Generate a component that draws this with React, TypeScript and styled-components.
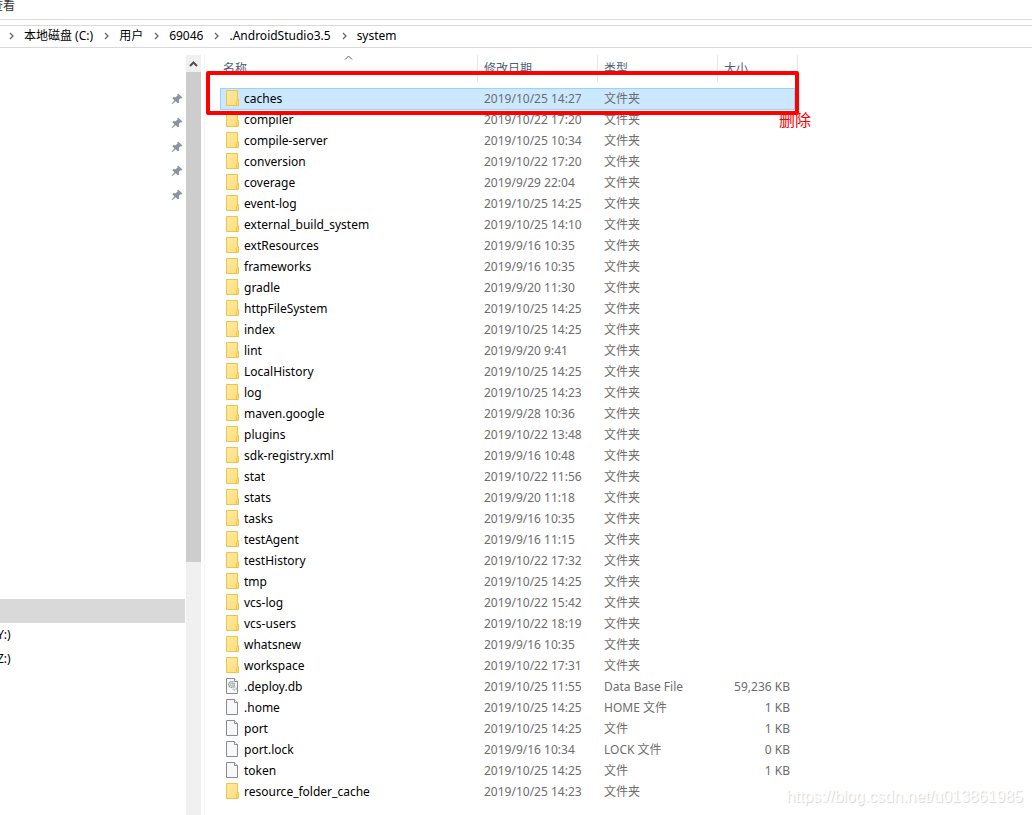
import React from "react";
import styled, { createGlobalStyle, css } from "styled-components";

const GlobalStyle = createGlobalStyle`
  *, *::before, *::after { box-sizing: border-box; }
  body {
    margin: 0;
    background: #fff;
    color: #000;
    font: 12px/21px "Noto Sans", "Noto Sans CJK SC", sans-serif;
  }
  button { font: inherit; color: inherit; background: none; border: 0; padding: 0; cursor: default; }
`;

const Explorer = styled.div`
  position: relative;
  display: flex;
  flex-direction: column;
  min-height: 100vh;
  overflow: hidden;
`;

const MenuBar = styled.nav`
  display: flex;
  height: 20px;
  border-bottom: 1px solid #d9d9d9;
`;

const MenuItem = styled.button`
  height: 12px;
  margin-left: -9px;
  line-height: 12px;
  color: #333;
`;

const AddressBar = styled.nav`
  display: flex;
  align-items: center;
  height: 23px;
  margin-top: 5px;
  padding: 0 0 1px 8px;
  border: solid #d9d9d9;
  border-width: 1px 0;
  white-space: nowrap;
`;

const Crumb = styled.button`
  margin: 0 10px 0 9px;
  line-height: 20px;
`;

const Body = styled.div`
  display: flex;
  flex: 1;
  padding-top: 7px;
`;

const Sidebar = styled.aside`
  display: flex;
  flex-direction: column;
  flex: 0 0 186px;
  padding-top: 32px;
`;

const PinList = styled.ul`
  margin: 0 0 392px;
  padding: 0 3px 0 0;
  list-style: none;
`;

const PinRow = styled.li`
  display: flex;
  align-items: center;
  justify-content: flex-end;
  height: 24px;
`;

const DriveRow = styled.button<{ $active?: boolean }>`
  width: 185px;
  height: 24px;
  text-align: left;
  text-indent: -3px;
  line-height: 24px;
  background: ${(p) => (p.$active ? "#d9d9d9" : "transparent")};
`;

const ScrollBar = styled.div`
  display: flex;
  flex-direction: column;
  flex: 0 0 15px;
  background: #f0f0f0;
`;

const ScrollButton = styled.button`
  display: flex;
  align-items: center;
  justify-content: center;
  height: 17px;
`;

const Thumb = styled.div`
  flex: 66;
  background: #cdcdcd;
`;

const Track = styled.div`
  flex: 34;
`;

const Pane = styled.main`
  flex: 1;
  min-width: 0;
  margin-left: 3px;
  padding-left: 15px;
  border-left: 1px solid #f5f5f5;
`;

const Listing = styled.div`
  position: relative;
  width: 578px;
`;

const Table = styled.table`
  width: 100%;
  table-layout: fixed;
  border-collapse: separate;
  border-spacing: 0;
  white-space: nowrap;
`;

const HeadCell = styled.th<{ $first?: boolean }>`
  position: relative;
  height: 27px;
  padding: 0 0 0 ${(p) => (p.$first ? 3 : 6)}px;
  border-right: 1px solid #e5e5e5;
  color: #4c607a;
  font-weight: 400;
  line-height: 26px;
  text-align: left;
`;

const SortMark = styled.svg`
  position: absolute;
  top: 0;
  left: 50%;
  margin-left: -5px;
`;

const Spacer = styled.tr`
  height: 6px;
`;

const selectedCell = css`
  background: #cce8ff;
  box-shadow: inset 0 1px #99d1ff, 0 1px #99d1ff;
`;

const Cell = styled.td<{ $right?: boolean }>`
  height: 21px;
  padding: 0 5px 0 6px;
  color: #6d6d6d;
  text-align: ${(p) => (p.$right ? "right" : "left")};
`;

const Row = styled.tr<{ $selected?: boolean }>`
  ${Cell} {
    ${(p) => p.$selected && selectedCell}
  }
  ${Cell}:first-child {
    border-left: 1px solid ${(p) => (p.$selected ? "#99d1ff" : "transparent")};
    padding-left: 5px;
  }
  ${Cell}:last-of-type {
    border-right: 1px solid ${(p) => (p.$selected ? "#99d1ff" : "transparent")};
    padding-right: 4px;
  }
`;

const FileName = styled.span`
  display: flex;
  align-items: center;
  gap: 5px;
  height: 21px;
  color: #000;

  svg {
    margin-bottom: 1px;
  }
`;

const Highlight = styled.div`
  position: absolute;
  top: 16px;
  left: -14px;
  right: -1px;
  height: 44px;
  border: 4px solid #fe0000;
  border-radius: 2px;
  pointer-events: none;
`;

const Note = styled.span`
  position: absolute;
  top: 54px;
  left: 559px;
  color: #fe0000;
  font: 16px/20px "Noto Sans CJK SC", sans-serif;
  white-space: nowrap;
`;

const Watermark = styled.div`
  position: absolute;
  right: 9px;
  bottom: 8px;
  color: #fff;
  font: 16px/20px "Liberation Sans", sans-serif;
  text-shadow: 1px 1px 1px #d4d4d4;
`;

const Chevron = () => (
  <svg width="7" height="8" viewBox="0 0 7 8" aria-hidden="true">
    <path d="M2 1l3 3-3 3" fill="none" stroke="#666" strokeWidth="1.3" />
  </svg>
);

const Pin = () => (
  <svg width="12" height="12" viewBox="0 0 12 12" aria-hidden="true">
    <path d="M7.200.5l4.300 4.200-1.200.7-.8-.2-1.700 1.900.3 2.200-1.200 1.100-2.300-2.200L1.400 11l-.9.300.3-.9 2.600-3.200-2.100-2 1.100-1.200 2.200.2 2-1.700-.3-.9z" fill="#8896a1" />
  </svg>
);

const FolderIcon = () => (
  <svg width="13" height="16" viewBox="0 0 13 16" aria-hidden="true">
    <defs>
      <linearGradient id="folder" x1="0" y1="0" x2="1" y2="1">
        <stop offset="0" stopColor="#ffeaa4" />
        <stop offset="1" stopColor="#fedd79" />
      </linearGradient>
    </defs>
    <path d="M.5.5h11v9h1v6H.5z" fill="url(#folder)" stroke="#ebc54b" />
    <path d="M10.500 15.500v-4l1-2" fill="none" stroke="#ebc54b" />
  </svg>
);

const FileIcon = ({ gear }: { gear?: boolean }) => (
  <svg width="13" height="16" viewBox="0 0 13 16" aria-hidden="true">
    <path d="M.5.5h8l3 3v12H.5z" fill="#f7f8f9" stroke="#8c8c8c" />
    <path d="M8.500.5v3h3" fill="#fff" stroke="#8c8c8c" />
    {gear && (
      <>
        <circle cx="5.500" cy="6.500" r="2.900" fill="#e8eaec" stroke="#92989d" strokeWidth="1.300" strokeDasharray="1.400 .6" />
        <circle cx="5.500" cy="6.500" r="1.200" fill="#fff" stroke="#92989d" strokeWidth=".8" />
        <circle cx="8.500" cy="10.500" r="1.700" fill="#e5f3fb" stroke="#8fc0dc" strokeWidth="1.200" strokeDasharray="1.200 .5" />
      </>
    )}
  </svg>
);

type Kind = "folder" | "file" | "db";
type Entry = { name: string; date: string; kind: Kind; type: string; size: string };

const folder = (name: string, date: string): Entry => ({ name, date, kind: "folder", type: "文件夹", size: "" });
const file = (name: string, date: string, type: string, size: string, kind: Kind = "file"): Entry => ({ name, date, kind, type, size });

const entries: Entry[] = [
  folder("caches", "2019/10/25 14:27"),
  folder("compiler", "2019/10/22 17:20"),
  folder("compile-server", "2019/10/25 10:34"),
  folder("conversion", "2019/10/22 17:20"),
  folder("coverage", "2019/9/29 22:04"),
  folder("event-log", "2019/10/25 14:25"),
  folder("external_build_system", "2019/10/25 14:10"),
  folder("extResources", "2019/9/16 10:35"),
  folder("frameworks", "2019/9/16 10:35"),
  folder("gradle", "2019/9/20 11:30"),
  folder("httpFileSystem", "2019/10/25 14:25"),
  folder("index", "2019/10/25 14:25"),
  folder("lint", "2019/9/20 9:41"),
  folder("LocalHistory", "2019/10/25 14:25"),
  folder("log", "2019/10/25 14:23"),
  folder("maven.google", "2019/9/28 10:36"),
  folder("plugins", "2019/10/22 13:48"),
  folder("sdk-registry.xml", "2019/9/16 10:48"),
  folder("stat", "2019/10/22 11:56"),
  folder("stats", "2019/9/20 11:18"),
  folder("tasks", "2019/9/16 10:35"),
  folder("testAgent", "2019/9/16 11:15"),
  folder("testHistory", "2019/10/22 17:32"),
  folder("tmp", "2019/10/25 14:25"),
  folder("vcs-log", "2019/10/22 15:42"),
  folder("vcs-users", "2019/10/22 18:19"),
  folder("whatsnew", "2019/9/16 10:35"),
  folder("workspace", "2019/10/22 17:31"),
  file(".deploy.db", "2019/10/25 11:55", "Data Base File", "59,236 KB", "db"),
  file(".home", "2019/10/25 14:25", "HOME 文件", "1 KB"),
  file("port", "2019/10/25 14:25", "文件", "1 KB"),
  file("port.lock", "2019/9/16 10:34", "LOCK 文件", "0 KB"),
  file("token", "2019/10/25 14:25", "文件", "1 KB"),
  folder("resource_folder_cache", "2019/10/25 14:23"),
];

const crumbs = ["本地磁盘 (C:)", "用户", "69046", ".AndroidStudio3.5", "system"];

export default function App() {
  return (
    <Explorer lang="zh-CN">
      <GlobalStyle />
      <MenuBar>
        <MenuItem>查看</MenuItem>
      </MenuBar>
      <AddressBar>
        {crumbs.map((c) => (
          <React.Fragment key={c}>
            <Chevron />
            <Crumb>{c}</Crumb>
          </React.Fragment>
        ))}
      </AddressBar>
      <Body>
        <Sidebar>
          <PinList>
            {[0, 1, 2, 3, 4].map((i) => (
              <PinRow key={i}>
                <Pin />
              </PinRow>
            ))}
          </PinList>
          <DriveRow $active />
          <DriveRow>Y:)</DriveRow>
          <DriveRow>Z:)</DriveRow>
        </Sidebar>
        <ScrollBar>
          <ScrollButton>
            <svg width="9" height="6" viewBox="0 0 9 6" aria-hidden="true">
              <path d="M1 5l3.500-3.500L8 5" fill="none" stroke="#505050" strokeWidth="2" />
            </svg>
          </ScrollButton>
          <Thumb />
          <Track />
        </ScrollBar>
        <Pane>
          <Listing>
            <Table>
              <colgroup>
                <col width="258" />
                <col width="120" />
                <col width="120" />
                <col width="77" />
                <col width="3" />
              </colgroup>
              <thead>
                <tr>
                  <HeadCell $first>
                    <button>名称</button>
                    <SortMark width="9" height="5" viewBox="0 0 9 5" aria-hidden="true">
                      <path d="M1 4.500l3.500-3.500L8 4.500" fill="none" stroke="#666" />
                    </SortMark>
                  </HeadCell>
                  <HeadCell>
                    <button>修改日期</button>
                  </HeadCell>
                  <HeadCell>
                    <button>类型</button>
                  </HeadCell>
                  <HeadCell colSpan={2}>
                    <button>大小</button>
                  </HeadCell>
                </tr>
              </thead>
              <tbody>
                <Spacer />
                {entries.map((e, i) => (
                  <Row key={e.name} $selected={i === 0}>
                    <Cell>
                      <FileName>
                        {e.kind === "folder" ? <FolderIcon /> : <FileIcon gear={e.kind === "db"} />}
                        {e.name}
                      </FileName>
                    </Cell>
                    <Cell>
                      <time>{e.date}</time>
                    </Cell>
                    <Cell>{e.type}</Cell>
                    <Cell $right>{e.size}</Cell>
                  </Row>
                ))}
              </tbody>
            </Table>
            <Highlight />
            <Note>删除</Note>
          </Listing>
        </Pane>
      </Body>
      <Watermark>https://blog.csdn.net/u013861985</Watermark>
    </Explorer>
  );
}
